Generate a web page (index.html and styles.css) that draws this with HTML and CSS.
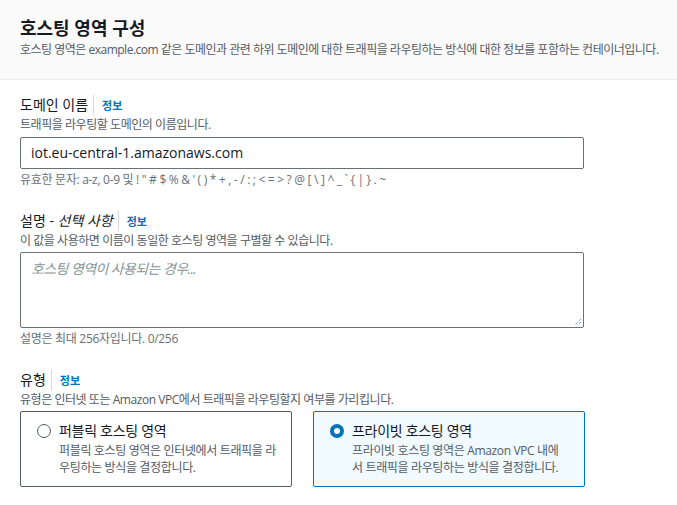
FILE: index.html
```html
<!DOCTYPE html>
<html lang="ko">
<head>
<meta charset="utf-8">
<link rel="stylesheet" href="styles.css">
</head>
<body>
<header class="head">
  <h1 class="title">호스팅 영역 구성</h1>
  <p class="head-desc">호스팅 영역은 example.com 같은 도메인과 관련 하위 도메인에 대한 트래픽을 라우팅하는 방식에 대한 정보를 포함하는 컨테이너입니다.</p>
</header>
<main class="body">
  <section class="field">
    <div class="label-row"><span class="label">도메인 이름</span><span class="info">정보</span></div>
    <p class="desc">트래픽을 라우팅할 도메인의 이름입니다.</p>
    <div class="input">iot.eu-central-1.amazonaws.com</div>
    <p class="constraint">유효한 문자: a-z, 0-9 및 ! " # $ % &amp; ' ( ) * + , - / : ; &lt; = &gt; ? @ [ \ ] ^ _ ` { | } . ~</p>
  </section>
  <section class="field">
    <div class="label-row"><span class="label">설명 - <i class="opt">선택 사항</i></span><span class="info">정보</span></div>
    <p class="desc">이 값을 사용하면 이름이 동일한 호스팅 영역을 구별할 수 있습니다.</p>
    <div class="textarea"><span class="placeholder">호스팅 영역이 사용되는 경우...</span>
      <svg class="grip" width="10" height="10" viewBox="0 0 10 10"><path d="M9 3 L3 9 M9 6 L6 9" stroke="#5f6b7a" stroke-width="1" stroke-dasharray="1 1"/></svg>
    </div>
    <p class="constraint">설명은 최대 256자입니다. 0/256</p>
  </section>
  <section class="field">
    <div class="label-row"><span class="label">유형</span><span class="info">정보</span></div>
    <p class="desc">유형은 인터넷 또는 Amazon VPC에서 트래픽을 라우팅할지 여부를 가리킵니다.</p>
    <div class="tiles">
      <div class="tile">
        <span class="radio"></span>
        <div class="tile-text">
          <div class="tile-title">퍼블릭 호스팅 영역</div>
          <div class="tile-desc">퍼블릭 호스팅 영역은 인터넷에서 트래픽을 라우팅하는 방식을 결정합니다.</div>
        </div>
      </div>
      <div class="tile selected">
        <span class="radio checked"></span>
        <div class="tile-text">
          <div class="tile-title">프라이빗 호스팅 영역</div>
          <div class="tile-desc">프라이빗 호스팅 영역은 Amazon VPC 내에서 트래픽을 라우팅하는 방식을 결정합니다.</div>
        </div>
      </div>
    </div>
  </section>
</main>
</body>
</html>
```

FILE: styles.css
```css
* { box-sizing: border-box; }
html, body { margin: 0; padding: 0; background: #fff; }
body {
  font-family: "Open Sans", "Noto Sans CJK KR", sans-serif;
  color: #16191f;
  width: 677px;
  height: 505px;
  overflow: hidden;
}
.head {
  background: #fafafa;
  border-bottom: 1px solid #eaeded;
  padding: 15px 20px 0 20px;
  height: 80px;
}
.title {
  margin: 0;
  font-size: 18px;
  font-weight: 700;
  line-height: 26px;
  color: #16191f;
}
.head-desc {
  margin: 0;
  font-size: 12px;
  line-height: 18px;
  color: #545b64;
  letter-spacing: -0.5px;
  white-space: nowrap;
}
.body { padding: 14px 20px 0 20px; }
.field { margin-bottom: 22px; }
.label-row {
  display: flex;
  align-items: center;
  height: 22px;
}
.label {
  font-size: 14px;
  color: #16191f;
  padding-right: 5px;
  border-right: 1px solid #d5dbdb;
  line-height: 20px;
}
.opt { font-style: italic; }
.info {
  font-size: 11px;
  font-weight: 700;
  color: #0073bb;
  padding-left: 8px;
}
.desc {
  margin: 0;
  font-size: 12px;
  line-height: 18px;
  color: #545b64;
  letter-spacing: -0.45px;
}
.input {
  margin-top: 3px;
  width: 564px;
  height: 32px;
  border: 1px solid #687078;
  border-radius: 2px;
  padding: 0 10px;
  font-size: 14px;
  line-height: 30px;
  color: #16191f;
}
.constraint {
  margin: 3px 0 0 0;
  font-size: 12px;
  line-height: 16px;
  color: #687078;
  letter-spacing: -0.3px;
}
.textarea {
  position: relative;
  margin-top: 2px;
  width: 564px;
  height: 76px;
  border: 1px solid #687078;
  border-radius: 2px;
  padding: 4px 10px;
}
.placeholder {
  font-size: 14px;
  font-style: italic;
  color: #879596;
  line-height: 22px;
  letter-spacing: -0.6px;
}
.grip { position: absolute; right: 1px; bottom: 1px; }
.tiles {
  display: flex;
  gap: 21px;
  margin-top: 2px;
}
.tile {
  width: 272px;
  height: 76px;
  border: 1px solid #545b64;
  border-radius: 2px;
  display: flex;
  align-items: flex-start;
  gap: 8px;
  padding: 8px 0 0 16px;
  background: #fff;
}
.tile.selected {
  background: #f1faff;
  border-color: #0073bb;
}
.radio {
  flex: none;
  width: 14px;
  height: 14px;
  border-radius: 50%;
  border: 1px solid #545b64;
  margin-top: 4px;
  background: #fff;
}
.radio.checked {
  border: 4px solid #0073bb;
}
.tile-title {
  font-size: 14px;
  line-height: 22px;
  color: #16191f;
  letter-spacing: -0.3px;
}
.tile-desc {
  font-size: 12px;
  line-height: 17px;
  color: #545b64;
  width: 222px;
  word-break: break-all;
  letter-spacing: -0.35px;
}
.tile.selected .tile-desc { width: 212px; }
```
